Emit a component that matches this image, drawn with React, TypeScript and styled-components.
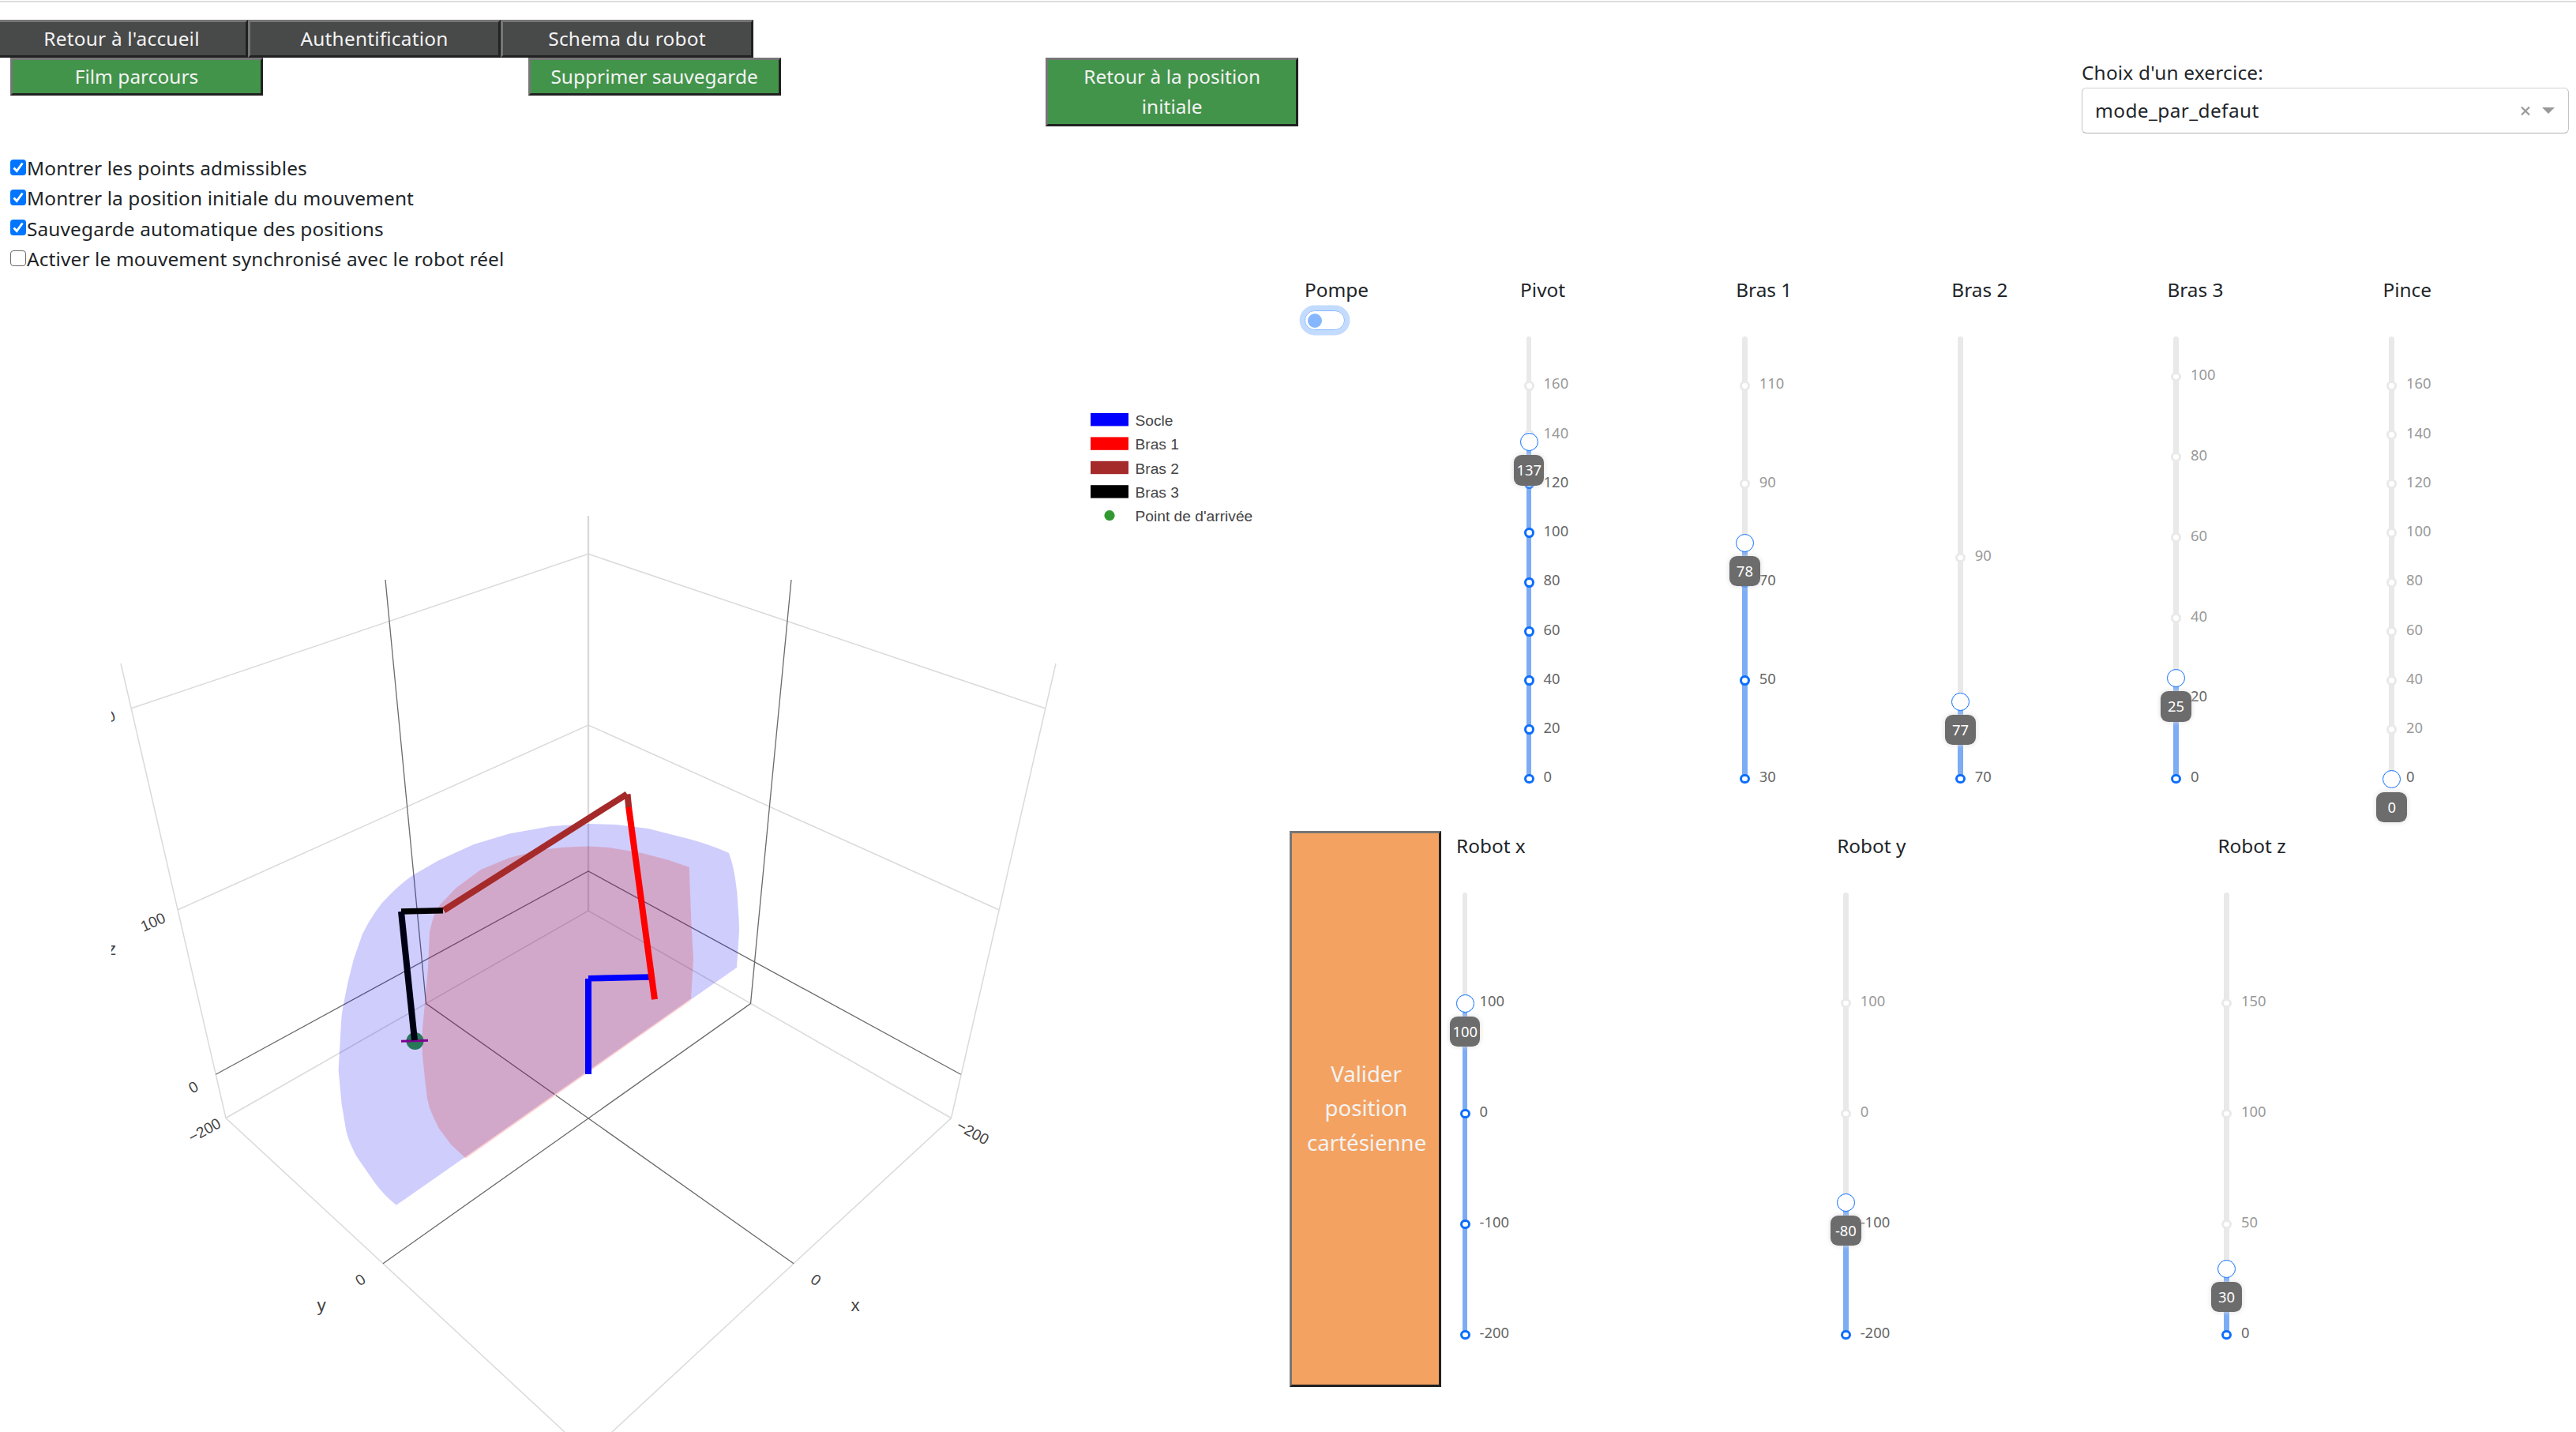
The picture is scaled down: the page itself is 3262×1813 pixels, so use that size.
import React from "react";
import styled, { createGlobalStyle } from "styled-components";

const GlobalStyle = createGlobalStyle`
  * { box-sizing: border-box; }
  body {
    margin: 0;
    background: #fff;
    color: #212529;
    font-family: "Noto Sans", "Open Sans", sans-serif;
    font-size: 24.4px;
    line-height: 38.4px;
    overflow: hidden;
  }
`;

const Page = styled.div`
  width: 3262px;
  height: 1813px;
  overflow: hidden;
  display: flex;
  flex-direction: column;
`;

const TopRule = styled.hr`
  width: 100%;
  height: 2px;
  margin: 1px 0 22px;
  border: 0;
  background: #dcdedd;
  flex: none;
`;

const NavBar = styled.nav`
  display: flex;
  height: 48px;
  margin-left: -6px;
  flex: none;
`;

const RaisedButton = styled.button<{ $bg: string; $track?: number }>`
  width: 320px;
  padding: 2px 9px;
  border: 3px solid;
  border-color: #767676 #212121 #212121 #767676;
  border-radius: 0;
  background: ${(p) => p.$bg};
  color: #f3f3f3;
  font: inherit;
  line-height: 38.4px;
  letter-spacing: ${(p) => p.$track ?? 0}px;
`;

const ActionRow = styled.div`
  display: flex;
  height: 121px;
  padding: 0 9px 0 13px;
  align-items: flex-start;
  flex: none;
`;

const ActionCell = styled.div`
  width: 655.6px;
  flex: none;
`;

const Exercise = styled.div`
  width: 617px;
  margin-left: auto;
`;

const ExerciseLabel = styled.label`
  display: block;
  height: 38px;
  letter-spacing: 0.2px;
`;

const Select = styled.div`
  display: flex;
  align-items: center;
  height: 58px;
  padding: 0 17px 0 16px;
  border: 1px solid;
  border-color: #d0d0d0 #c4c4c4 #b3b3b3;
  border-radius: 6px;
`;

const SelectValue = styled.span`
  flex: 1;
  letter-spacing: 0.42px;
`;

const Caret = styled.svg`
  margin-left: 15px;
`;

const Main = styled.main`
  display: flex;
  flex: 1;
`;

const LeftPane = styled.section`
  width: 1633px;
  flex: none;
`;

const Options = styled.div`
  height: 164px;
  padding-left: 13px;
`;

const Option = styled.label`
  display: flex;
  height: 38.3px;
  align-items: center;
  letter-spacing: 0.14px;
`;

const Box = styled.span<{ $on: boolean }>`
  display: flex;
  width: 20px;
  height: 20px;
  margin-right: 1px;
  margin-top: -3px;
  border: ${(p) => (p.$on ? "0" : "1px solid #6a6a6a")};
  border-radius: 4px;
  background: ${(p) => (p.$on ? "#0075ff" : "#fff")};
`;

const Plot = styled.svg`
  display: block;
  font-family: "Liberation Sans", Arial, sans-serif;
  font-size: 19.2px;
  fill: #444;
`;

const RightPane = styled.section`
  flex: 1;
  padding-top: 154px;
`;

const JointRow = styled.div`
  display: flex;
  height: 704px;
  padding-left: 19px;
`;

const Column = styled.div<{ $w: number }>`
  width: ${(p) => p.$w}px;
  flex: none;
`;

const ColumnTitle = styled.div`
  height: 78px;
  white-space: nowrap;
`;

const Switch = styled.div`
  display: flex;
  align-items: center;
  width: 51px;
  height: 25px;
  margin: -33px 0 0 0;
  padding-left: 3px;
  border: 1px solid #86b7fe;
  border-radius: 13px;
  box-shadow: 0 0 0 6.4px #c2dbfe;
`;

const Knob = styled.span`
  width: 18px;
  height: 18px;
  border-radius: 50%;
  background: #86b7fe;
`;

const Track = styled.div`
  position: relative;
  width: 6.4px;
  height: 560px;
  margin-left: 8px;
  border-radius: 4px;
  background: #e9e9e9;
`;

const Fill = styled.div`
  position: absolute;
  left: 0;
  right: 0;
  bottom: 0;
  border-radius: 4px;
  background: #7cacf4;
`;

const Dot = styled.span<{ $on: boolean }>`
  position: absolute;
  left: -3.2px;
  width: 12.8px;
  height: 12.8px;
  margin-bottom: -6.4px;
  border: 3px solid ${(p) => (p.$on ? "#0d6efd" : "#e9e9e9")};
  border-radius: 50%;
  background: #fff;
`;

const Mark = styled.span<{ $on: boolean }>`
  position: absolute;
  left: 21.5px;
  margin-bottom: -12px;
  color: ${(p) => (p.$on ? "#666" : "#999")};
  font-size: 18.4px;
  line-height: 28.8px;
`;

const Handle = styled.span`
  position: absolute;
  left: -8.3px;
  width: 23px;
  height: 23px;
  margin-bottom: -11.5px;
  border: 1.2px solid #0d6efd;
  border-radius: 50%;
  background: #fff;
`;

const Tip = styled.span`
  position: absolute;
  left: -16px;
  width: 38.4px;
  height: 38.4px;
  margin-bottom: -55px;
  border-radius: 9.6px;
  background: #6c6c6c;
  box-shadow: 0 0 6px #d9d9d9;
  color: #fff;
  font-size: 18.4px;
  line-height: 37px;
  text-align: center;
`;

const CartesianRow = styled.div`
  display: flex;
  height: 703px;
`;

const ValidateButton = styled(RaisedButton)`
  width: 192px;
  height: 704px;
  margin-right: 19px;
  padding: 0 17px 2px 19px;
  font-size: 27.6px;
  line-height: 43.2px;
`;

type SliderProps = { title: string; min: number; max: number; value: number; marks: number[]; w: number };

function Slider({ title, min, max, value, marks, w }: SliderProps) {
  const at = (v: number) => `${((v - min) / (max - min)) * 100}%`;
  return (
    <Column $w={w}>
      <ColumnTitle>{title}</ColumnTitle>
      <Track>
        <Fill style={{ height: at(value) }} />
        {marks.map((m) => (
          <React.Fragment key={m}>
            <Dot $on={m <= value} style={{ bottom: at(m) }} />
            <Mark $on={m <= value} style={{ bottom: at(m) }}>{m}</Mark>
          </React.Fragment>
        ))}
        <Handle style={{ bottom: at(value) }} />
        <Tip style={{ bottom: at(value) }}>{value}</Tip>
      </Track>
    </Column>
  );
}

const twenties = [0, 20, 40, 60, 80, 100, 120, 140, 160];
const joints = [
  { title: "Pivot", min: 0, max: 180, value: 137, marks: twenties },
  { title: "Bras 1", min: 30, max: 120, value: 78, marks: [30, 50, 70, 90, 110] },
  { title: "Bras 2", min: 70, max: 110, value: 77, marks: [70, 90] },
  { title: "Bras 3", min: 0, max: 110, value: 25, marks: [0, 20, 40, 60, 80, 100] },
  { title: "Pince", min: 0, max: 180, value: 0, marks: twenties },
];
const axes = [
  { title: "Robot x", min: -200, max: 200, value: 100, marks: [-200, -100, 0, 100] },
  { title: "Robot y", min: -200, max: 200, value: -80, marks: [-200, -100, 0, 100] },
  { title: "Robot z", min: 0, max: 200, value: 30, marks: [0, 50, 100, 150] },
];
const options: [string, boolean][] = [
  ["Montrer les points admissibles", true],
  ["Montrer la position initiale du mouvement", true],
  ["Sauvegarde automatique des positions", true],
  ["Activer le mouvement synchronisé avec le robot réel", false],
];
const legend = [
  ["Socle", "#0000ff"],
  ["Bras 1", "#ff0000"],
  ["Bras 2", "#a52a2a"],
  ["Bras 3", "#000000"],
];

const outerReach =
  "M745 1043 L698 1046 L645 1055.6 L600 1069 L555 1089.5 L523 1108 Q507 1119 493 1133.6 Q483 1143 475 1155 Q466 1168 459 1182.5 L448 1214 Q438 1250 432.6 1285.8 L428.6 1354.6 L432.6 1397.7 L438.4 1432 Q441 1443 446 1453 Q450 1463 457 1472 L475 1498 Q486 1513 501.8 1525.7 L933 1225 L936 1179.6 Q936 1165 934.8 1151 Q934 1130 930.8 1110.7 Q928 1093 922.8 1079.7 Q898 1069 871.9 1062 L820.5 1049 L780 1044 Z";
const innerReach =
  "M745 1071.6 Q714 1072 685 1076 L645 1086 L609 1101 L577.7 1124 L557.6 1145 Q551 1154 547.8 1165 L544 1179.6 L542 1225.5 L538.4 1265.7 L534.8 1305.8 L534.8 1334.5 L538.4 1369 L541 1390.8 Q543 1402 547.8 1412 L555.4 1428 L571 1449 L588.8 1465.4 L875 1264.5 L878 1214 L875.4 1168 L874 1133.6 L872.8 1098 L847 1089 L811.6 1079.7 L771 1073 Z";

function RobotPlot() {
  return (
    <Plot width="1633" height="1455" viewBox="0 358 1633 1455">
      <defs>
        <clipPath id="scene"><rect x="141" y="500" width="1210" height="1313" /></clipPath>
      </defs>
      <g clipPath="url(#scene)">
        <g fill="none" stroke="#dadada" strokeWidth="1.5">
          <path d="M745 653V1153" strokeWidth="2.4" />
          <path d="M166.5 896.8L745 701.4L1323.5 896.8M225.4 1151.8L745 918L1264.6 1151.8M286 1415.5L745 1153L1204.5 1415.5" />
          <path d="M153 840L286 1415.5L485 1599.7L715 1813M1337 840L1204.5 1415.5L1005 1599.7L775 1813" />
        </g>
        <g fill="none" stroke="#6a6a6a" strokeWidth="1.3">
          <path d="M273.3 1360.3L745 1103L1216.7 1360.3" />
          <path d="M488 734L539.5 1270.6L1005 1599.7M1002 734L950.5 1270.6L485 1599.7" />
        </g>
        <path d={outerReach} fill="rgb(15,5,240)" opacity="0.2" />
        <path d={innerReach} fill="rgb(224,18,5)" opacity="0.2" />
        <path d="M589 1466.2L875 1265.2" stroke="#ffcccc" strokeWidth="1.6" />
        <g fill="none">
          <path d="M745 1360V1239" stroke="#00f" strokeWidth="8" />
          <path d="M745 1238.8L823 1237" stroke="#00f" strokeWidth="7.6" />
          <path d="M829 1265.3L796 1021" stroke="#f00" strokeWidth="8" />
          <path d="M796.2 1022L794.5 1005.5" stroke="#a52a2a" strokeWidth="8" />
          <path d="M794 1005.3L562 1152.5" stroke="#a52a2a" strokeWidth="8" />
          <path d="M561 1152.8L508 1154" stroke="#000" strokeWidth="7.4" />
        </g>
        <circle cx="525.5" cy="1318" r="11" fill="#28785a" />
        <path d="M508 1318.3L542 1317.2" stroke="#800090" strokeWidth="3" />
        <path d="M508 1154L525 1317" stroke="#000014" strokeWidth="8" />
        <g textAnchor="middle">
          <text transform="translate(193.4 1167) rotate(-24)" y="7">100</text>
          <text transform="translate(244.6 1376) rotate(-28)" y="7">0</text>
          <text transform="translate(258.8 1430.6) rotate(-29)" y="7">−200</text>
          <text transform="translate(1232 1433.4) rotate(29)" y="7">−200</text>
          <text transform="translate(456 1620) rotate(-35)" y="7">0</text>
          <text transform="translate(1033.5 1620) rotate(35)" y="7">0</text>
          <text transform="translate(130 910) rotate(-19)" y="7">200</text>
          <text x="407" y="1660" fontSize="22.4">y</text>
          <text x="1083" y="1660" fontSize="22.4">x</text>
          <text x="141.6" y="1209" fontSize="22.4">z</text>
        </g>
      </g>
      {legend.map(([name, color], i) => (
        <g key={name}>
          <rect x="1381" y={523 + i * 30.4} width="48" height="16.4" fill={color} />
          <text x="1437.5" y={539 + i * 30.4}>{name}</text>
        </g>
      ))}
      <circle cx="1405" cy="652.7" r="6.6" fill="#329932" />
      <text x="1437.5" y="660">Point de d'arrivée</text>
    </Plot>
  );
}

export default function App() {
  return (
    <Page>
      <GlobalStyle />
      <TopRule />
      <NavBar>
        {["Retour à l'accueil", "Authentification", "Schema du robot"].map((t) => (
          <RaisedButton key={t} $bg="#484949" $track={0.22}>{t}</RaisedButton>
        ))}
      </NavBar>
      <ActionRow>
        {["Film parcours", "Supprimer sauvegarde", "Retour à la position initiale"].map((t) => (
          <ActionCell key={t}><RaisedButton $bg="#43944b" $track={0.05}>{t}</RaisedButton></ActionCell>
        ))}
        <Exercise>
          <ExerciseLabel>Choix d'un exercice:</ExerciseLabel>
          <Select>
            <SelectValue>mode_par_defaut</SelectValue>
            <svg width="12" height="13" viewBox="0 0 12 13"><path d="M1 1.5L11 11.5M11 1.5L1 11.5" stroke="#999" strokeWidth="2.2" /></svg>
            <Caret width="16" height="8" viewBox="0 0 16 8"><path d="M0 0H16L8 8Z" fill="#999" /></Caret>
          </Select>
        </Exercise>
      </ActionRow>
      <Main>
        <LeftPane>
          <Options>
            {options.map(([t, on]) => (
              <Option key={t}>
                <Box $on={on}>
                  {on && <svg width="20" height="20" viewBox="0 0 20 20"><path d="M4.5 10.5L8.2 14.5L15.5 4.5" fill="none" stroke="#fff" strokeWidth="2.8" /></svg>}
                </Box>
                {t}
              </Option>
            ))}
          </Options>
          <RobotPlot />
        </LeftPane>
        <RightPane>
          <JointRow>
            <Column $w={273.1}>
              <ColumnTitle>Pompe</ColumnTitle>
              <Switch><Knob /></Switch>
            </Column>
            {joints.map((j) => <Slider key={j.title} w={273.1} {...j} />)}
          </JointRow>
          <CartesianRow>
            <ValidateButton $bg="#f4a261">Valider position cartésienne</ValidateButton>
            {axes.map((a) => <Slider key={a.title} w={482.2} {...a} />)}
          </CartesianRow>
        </RightPane>
      </Main>
    </Page>
  );
}
